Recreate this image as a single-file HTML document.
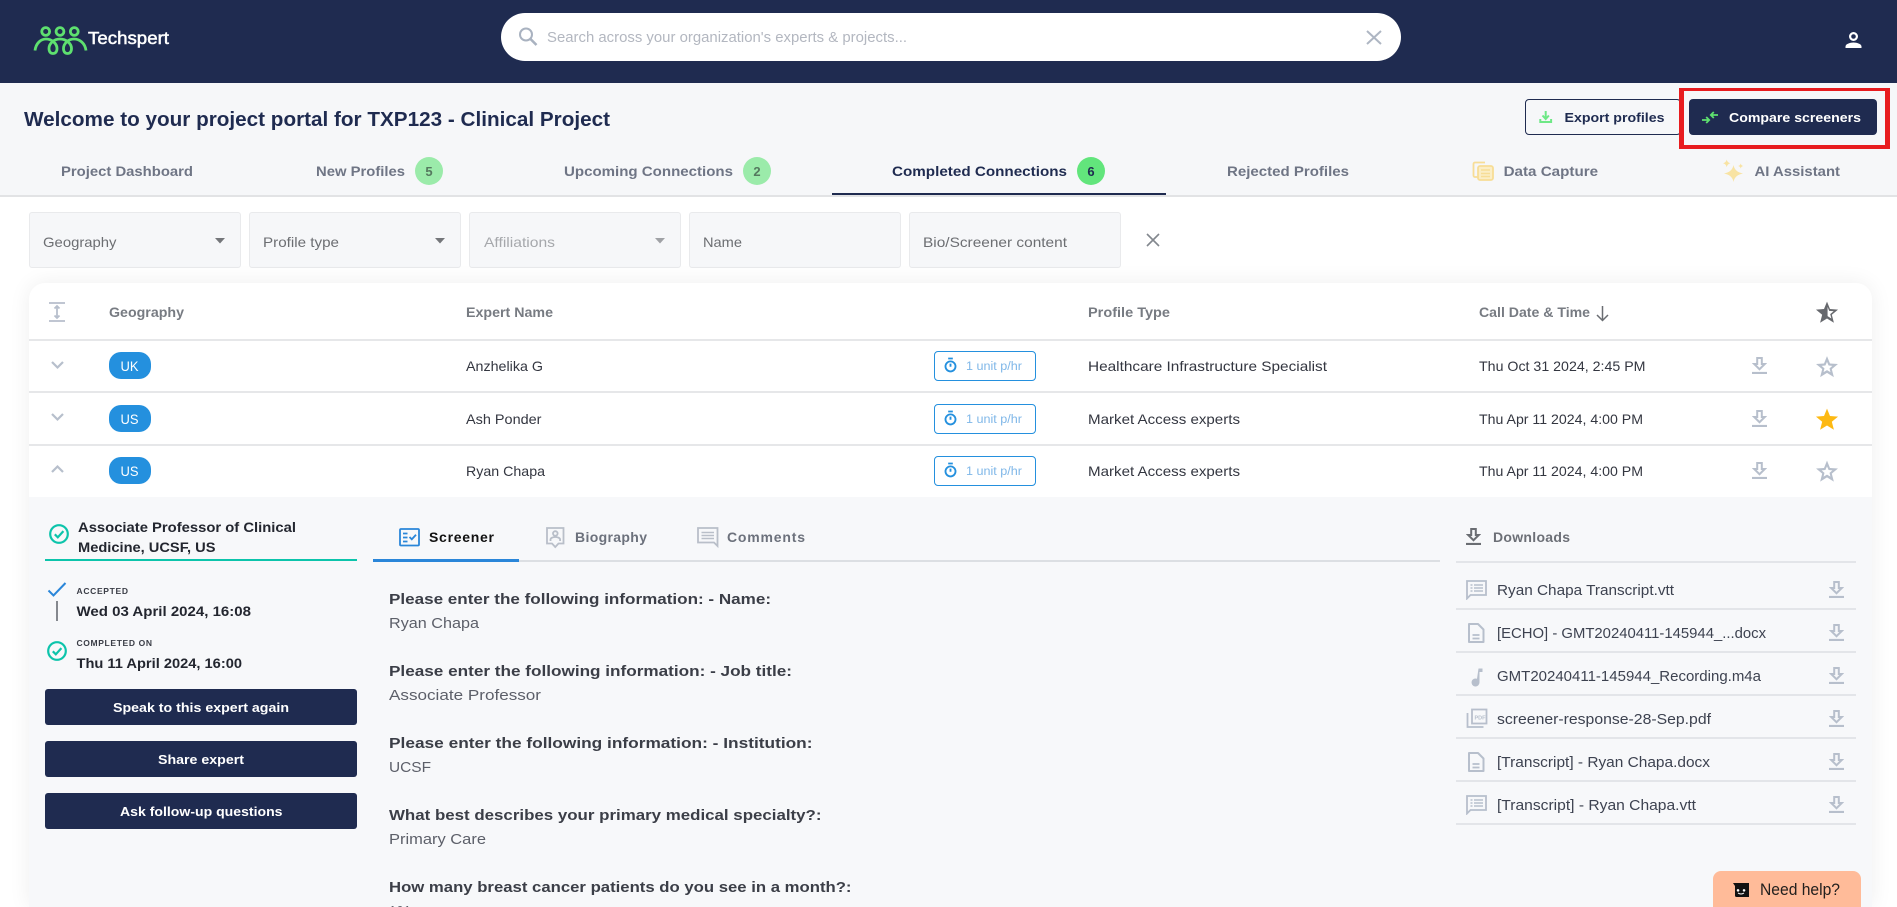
<!DOCTYPE html>
<html lang="en"><head><meta charset="utf-8"><title>Techspert project portal</title>
<style>
html,body{margin:0;padding:0;width:1897px;height:907px;overflow:hidden;background:#fff;font-family:"Liberation Sans",sans-serif}
#p{position:relative;width:1897px;height:907px;overflow:hidden}
.b{position:absolute;box-sizing:border-box}
svg.o{position:absolute;left:0;top:0;display:block}
text{font-family:"Liberation Sans",sans-serif}
.f{background:#f6f7f9;border:1px solid #e9eaec;border-radius:3px;top:212px;height:56px;width:212px}
.l{background:#e6e7e9;height:2px}
.btn{background:#1f2b50;border-radius:3px;left:45px;width:312px;height:36px}
.pill{left:934px;width:102px;height:30px;border:1px solid #2490de;border-radius:4px}
.geo{left:109px;width:42px;height:27px;border-radius:12px;background:#2490de}
.dl{left:1456px;width:400px;height:2px;background:#e3e5e9}
.q{font-size:15px;font-weight:700;fill:#3b3e47}
.a{font-size:15px;fill:#5c5f69}
.tb{font-size:14px;font-weight:700;fill:#6f7585}
.th{font-size:13.5px;font-weight:700;fill:#777b82}
.td{font-size:14px;fill:#333640}
.u{font-size:11.5px;fill:#7fb7e8}
.df{font-size:14.5px;fill:#3d4250}
.w{font-size:13px;font-weight:700;fill:#fff}
.fl{font-size:14px;fill:#6c6e72}
.bg{font-size:14px;fill:#fff}
.dt{font-size:14px;font-weight:700;fill:#23262f}
.sm{font-size:8.5px;font-weight:700;fill:#3a3d46}
</style></head><body><div id="p">
<div class="b" style="left:0;top:0;width:1897px;height:83px;background:#1f2b50"></div>
<div class="b" style="left:501px;top:13px;width:900px;height:48px;background:#fff;border-radius:24px"></div>
<div class="b" style="left:0;top:83px;width:1897px;height:112px;background:#f6f7f9"></div>
<div class="b" style="left:0;top:195px;width:1897px;height:2px;background:#e2e3e5"></div>
<div class="b" style="left:832px;top:193px;width:334px;height:2px;background:#1f2b50"></div>
<div class="b" style="left:415px;top:157px;width:28px;height:28px;border-radius:50%;background:#9bebaa"></div>
<div class="b" style="left:743px;top:157px;width:28px;height:28px;border-radius:50%;background:#9bebaa"></div>
<div class="b" style="left:1077px;top:157px;width:28px;height:28px;border-radius:50%;background:#62e57c"></div>
<div class="b" style="left:1525px;top:99px;width:156px;height:36px;border:1px solid #1f2b50;border-radius:4px;background:#f6f7f9"></div>
<div class="b" style="left:1689px;top:99px;width:188px;height:36px;background:#1f2b50;border-radius:4px"></div>
<div class="b" style="left:1679px;top:88px;width:211px;height:61px;border:solid #e81c1f;border-width:3px 5px 4px 5px"></div>
<div class="b f" style="left:29px"></div><div class="b f" style="left:249px"></div><div class="b f" style="left:469px"></div><div class="b f" style="left:689px"></div><div class="b f" style="left:909px"></div>
<div class="b" style="left:29px;top:283px;width:1843px;height:624px;background:#fff;border-radius:16px 16px 0 0;box-shadow:0 0 22px rgba(0,0,0,.07)"></div>
<div class="b l" style="left:29px;top:339px;width:1843px"></div>
<div class="b l" style="left:29px;top:391px;width:1843px"></div>
<div class="b l" style="left:29px;top:444px;width:1843px"></div>
<div class="b" style="left:29px;top:497px;width:1843px;height:410px;background:#f7f8fa"></div>
<div class="b geo" style="top:352px"></div><div class="b geo" style="top:405px"></div><div class="b geo" style="top:457px"></div>
<div class="b pill" style="top:351px"></div><div class="b pill" style="top:404px"></div><div class="b pill" style="top:456px"></div>
<div class="b" style="left:45px;top:559px;width:312px;height:2px;background:#0cc4ab"></div>
<div class="b" style="left:373px;top:560px;width:1067px;height:2px;background:#dcdfe3"></div>
<div class="b" style="left:373px;top:559px;width:146px;height:3px;background:#2a86d9"></div>
<div class="b btn" style="top:689px"></div><div class="b btn" style="top:741px"></div><div class="b btn" style="top:793px"></div>
<div class="b dl" style="top:561px"></div><div class="b dl" style="top:608px"></div><div class="b dl" style="top:651px"></div><div class="b dl" style="top:694px"></div><div class="b dl" style="top:737px"></div><div class="b dl" style="top:780px"></div><div class="b dl" style="top:823px"></div>
<div class="b" style="left:1713px;top:871px;width:148px;height:36px;background:#ffbb99;border-radius:8px 8px 0 0"></div>

<svg class="o" width="1897" height="907" viewBox="0 0 1897 907" xmlns="http://www.w3.org/2000/svg">
<defs>
<symbol id="dl" viewBox="0 0 15 17"><path d="M5.200 1h4.600v6h3L7.500 12.200 2.200 7h3z" fill="none" stroke="currentColor" stroke-width="2"/><path d="M0 16h15" stroke="currentColor" stroke-width="2.200"/></symbol>
<symbol id="st" viewBox="0 0 20 21"><path fill-rule="evenodd" fill="currentColor" d="M10 1L12.600 7.400 19.600 7.900 14.200 12.400 16 19.400 10 15.600 4 19.400 5.800 12.400 .4 7.900 7.400 7.400zM10 6L8.600 9.200 5.300 9.500 7.800 11.700 7 15 10 13.200 13 15 12.200 11.700 14.700 9.500 11.400 9.200z"/></symbol>
<symbol id="tm" viewBox="0 0 14 17"><circle cx="7" cy="10" r="5.400" fill="none" stroke="currentColor" stroke-width="2"/><path d="M4.500 1.500h5M7 7v3.400" stroke="currentColor" stroke-width="2"/></symbol>
<symbol id="cc" viewBox="0 0 20 20"><circle cx="10" cy="10" r="8.800" fill="none" stroke="#0cc4ab" stroke-width="2.200"/><path d="M5.800 10.300l3 3 5.600-6.200" fill="none" stroke="#0cc4ab" stroke-width="2.200"/></symbol>
<symbol id="cm" viewBox="0 0 21 20"><path d="M1 1h19v14H4.500L1 18.500z" fill="none" stroke="currentColor" stroke-width="1.800"/><path d="M4.500 5h2M8 5h9M4.500 8h2M8 8h9M4.500 11h2M8 11h9" stroke="currentColor" stroke-width="1.500"/></symbol>
<symbol id="dc" viewBox="0 0 18 20"><path d="M2 1h9l5.500 5.500V19H2z" fill="none" stroke="currentColor" stroke-width="2" stroke-linejoin="round"/><path d="M5.500 12h7M5.500 15.500h7" stroke="currentColor" stroke-width="1.700"/></symbol>
</defs>

<!-- logo -->
<g fill="none" stroke="#5ee06f" stroke-width="2.800">
<circle cx="45.700" cy="31.500" r="3.900"/><circle cx="60" cy="31.500" r="3.900"/><circle cx="74.300" cy="31.500" r="3.900"/>
<path d="M35 50.500C36 43 41 39 46 39C51.500 39 57 43.500 57 48.500C57 52 55.200 53.500 53 53.500C50.800 53.500 49 52 49 48.500C49 43.500 54 39 60 39C66 39 71.500 43.500 71.500 48.500C71.500 52 69.700 53.500 67.500 53.500C65.300 53.500 63.500 52 63.500 48.500C63.500 43.500 68.500 39 74 39C79.500 39 85 43 86 50.500"/>
</g>
<text x="88" y="44" font-size="17.500" fill="#fff" stroke="#fff" stroke-width=".5" textLength="81" lengthAdjust="spacingAndGlyphs">Techspert</text>

<!-- search -->
<g fill="none" stroke="#a9b2c0" stroke-width="2"><circle cx="526" cy="34.500" r="6"/><path d="M530.500 39l6 6" stroke-width="2.600"/></g>
<text x="547" y="42" font-size="14.500" fill="#b3b7c0" textLength="360" lengthAdjust="spacingAndGlyphs">Search across your organization's experts &amp; projects...</text>
<path d="M1367 31l14 13M1381 31l-14 13" stroke="#aeb6c3" stroke-width="2" fill="none"/>
<circle cx="1853.500" cy="36.500" r="3.400" fill="none" stroke="#fff" stroke-width="2.200"/><path d="M1845.500 48v-1.500c0-2.500 4.500-4 8-4s8 1.500 8 4V48z" fill="#fff"/>

<!-- title + actions -->
<text x="24" y="126" font-size="20" font-weight="700" fill="#1f2b50" textLength="586" lengthAdjust="spacingAndGlyphs">Welcome to your project portal for TXP123 - Clinical Project</text>
<g fill="none" stroke="#6ee886" stroke-width="2"><path d="M1545.700 111v8M1542.500 115.500l3.200 3.500 3.200-3.500"/><path d="M1540.300 119v3h10.800v-3"/></g>
<text x="1564.500" y="122" font-size="13" font-weight="700" fill="#1f2b50" textLength="100" lengthAdjust="spacingAndGlyphs">Export profiles</text>
<path d="M1718 115h-7M1713.800 112l-3 3 3 3M1702 120h7M1706.200 117l3 3-3 3" fill="none" stroke="#5ee06f" stroke-width="1.800"/>
<text x="1729" y="122" font-size="13" font-weight="700" fill="#fff" textLength="132" lengthAdjust="spacingAndGlyphs">Compare screeners</text>

<!-- tabs -->
<text class="tb" x="61" y="176" textLength="132" lengthAdjust="spacingAndGlyphs">Project Dashboard</text>
<text class="tb" x="316" y="176" textLength="89" lengthAdjust="spacingAndGlyphs">New Profiles</text>
<text x="429" y="176" font-size="13" font-weight="700" fill="#55795f" text-anchor="middle">5</text>
<text class="tb" x="564" y="176" textLength="169" lengthAdjust="spacingAndGlyphs">Upcoming Connections</text>
<text x="757" y="176" font-size="13" font-weight="700" fill="#55795f" text-anchor="middle">2</text>
<text class="tb" x="892" y="176" style="fill:#1f2b50" textLength="175" lengthAdjust="spacingAndGlyphs">Completed Connections</text>
<text x="1091" y="176" font-size="13" font-weight="700" fill="#1f2b50" text-anchor="middle">6</text>
<text class="tb" x="1227" y="176" textLength="122" lengthAdjust="spacingAndGlyphs">Rejected Profiles</text>
<g transform="translate(-1.500 0)"><g fill="none" stroke="#f7dd96" stroke-width="1.800"><path d="M1479 177h-2.500a1.500 1.500 0 0 1-1.500-1.500V164a1.500 1.500 0 0 1 1.500-1.500h10"/><rect x="1479.500" y="166" width="15" height="14" rx="2" fill="#fbeec6"/><path d="M1482.500 170h9M1482.500 173.500h9M1482.500 176.500h9" stroke-width="1.500"/></g></g>
<text class="tb" x="1503.600" y="176" textLength="94.500" lengthAdjust="spacingAndGlyphs">Data Capture</text>
<g fill="#f8e3a3"><path d="M1733.500 165q1.200 7 9.500 8.500q-8.300 1.500-9.500 8.500q-1.200-7-9.500-8.500q8.300-1.500 9.500-8.500z"/><path d="M1726.700 159.500q.6 3 3.700 3.800q-3.100.8-3.700 3.800q-.6-3-3.700-3.800q3.100-.8 3.700-3.800z"/><path d="M1740.700 163.500q.4 2 2.500 2.500q-2.100.5-2.500 2.500q-.4-2-2.500-2.500q2.100-.5 2.500-2.500z"/></g>
<text class="tb" x="1754.500" y="176" textLength="85.500" lengthAdjust="spacingAndGlyphs">AI Assistant</text>

<!-- filters -->
<text class="fl" x="43" y="247" textLength="73.500" lengthAdjust="spacingAndGlyphs">Geography</text>
<text class="fl" x="263" y="247" textLength="76" lengthAdjust="spacingAndGlyphs">Profile type</text>
<text class="fl" x="484" y="247" style="fill:#a6a8ac" textLength="71" lengthAdjust="spacingAndGlyphs">Affiliations</text>
<text class="fl" x="703" y="247" textLength="39" lengthAdjust="spacingAndGlyphs">Name</text>
<text class="fl" x="923" y="247" textLength="144" lengthAdjust="spacingAndGlyphs">Bio/Screener content</text>
<path d="M215 238h10l-5 5.500z" fill="#74767a"/><path d="M435 238h10l-5 5.500z" fill="#74767a"/><path d="M655 238h10l-5 5.500z" fill="#a0a2a6"/>
<path d="M1147 234l12 12M1159 234l-12 12" stroke="#83878e" stroke-width="1.600" fill="none"/>

<!-- table header -->
<g stroke="#b7bfcc" fill="none" stroke-width="1.800"><path d="M49 303h16M49 321h16M57 306v12" /><path d="M54.500 308.500l2.500-2.500 2.500 2.500M54.500 315.500l2.500 2.500 2.500-2.500"/></g>
<text class="th" x="109" y="317" textLength="75" lengthAdjust="spacingAndGlyphs">Geography</text>
<text class="th" x="466" y="317" textLength="87" lengthAdjust="spacingAndGlyphs">Expert Name</text>
<text class="th" x="1088" y="317" textLength="82" lengthAdjust="spacingAndGlyphs">Profile Type</text>
<text class="th" x="1479" y="317" textLength="111" lengthAdjust="spacingAndGlyphs">Call Date &amp; Time</text>
<path d="M1602.500 306v14M1597 315l5.500 5.500 5.500-5.500" fill="none" stroke="#6a6d72" stroke-width="1.500"/>
<g transform="translate(1815.500 300.500) scale(1.150)"><path fill="#66686d" d="M10 1L12.600 7.400 19.600 7.900 14.200 12.400 16 19.400 10 15.600 4 19.400 5.800 12.400 .4 7.900 7.400 7.400z"/><path fill="#fff" d="M10.500 5.500L11.900 9 15.800 9.300 12.800 11.800 13.800 15.600 10.500 13.600z"/></g>

<!-- rows -->
<g fill="none" stroke="#b7bfcc" stroke-width="2.200"><path d="M52 362l5.500 5.500 5.500-5.500M52 414l5.500 5.500 5.500-5.500M52 472l5.500-5.500 5.500 5.500"/></g>
<text class="bg" x="120.500" y="371" textLength="18" lengthAdjust="spacingAndGlyphs">UK</text>
<text class="bg" x="120.500" y="424" textLength="18" lengthAdjust="spacingAndGlyphs">US</text>
<text class="bg" x="120.500" y="476" textLength="18" lengthAdjust="spacingAndGlyphs">US</text>
<text class="td" x="466" y="371" textLength="77" lengthAdjust="spacingAndGlyphs">Anzhelika G</text>
<text class="td" x="466" y="424" textLength="75.500" lengthAdjust="spacingAndGlyphs">Ash Ponder</text>
<text class="td" x="466" y="476" textLength="79" lengthAdjust="spacingAndGlyphs">Ryan Chapa</text>
<use href="#tm" x="944" y="357" width="13" height="16" color="#2490de"/><use href="#tm" x="944" y="410" width="13" height="16" color="#2490de"/><use href="#tm" x="944" y="462" width="13" height="16" color="#2490de"/>
<text class="u" x="966" y="370" textLength="56" lengthAdjust="spacingAndGlyphs">1 unit p/hr</text>
<text class="u" x="966" y="423" textLength="56" lengthAdjust="spacingAndGlyphs">1 unit p/hr</text>
<text class="u" x="966" y="475" textLength="56" lengthAdjust="spacingAndGlyphs">1 unit p/hr</text>
<text class="td" x="1088" y="371" textLength="239" lengthAdjust="spacingAndGlyphs">Healthcare Infrastructure Specialist</text>
<text class="td" x="1088" y="424" textLength="152" lengthAdjust="spacingAndGlyphs">Market Access experts</text>
<text class="td" x="1088" y="476" textLength="152" lengthAdjust="spacingAndGlyphs">Market Access experts</text>
<text class="td" x="1479" y="371" textLength="166.500" lengthAdjust="spacingAndGlyphs">Thu Oct 31 2024, 2:45 PM</text>
<text class="td" x="1479" y="424" textLength="164" lengthAdjust="spacingAndGlyphs">Thu Apr 11 2024, 4:00 PM</text>
<text class="td" x="1479" y="476" textLength="164" lengthAdjust="spacingAndGlyphs">Thu Apr 11 2024, 4:00 PM</text>
<use href="#dl" x="1752" y="357" width="15" height="17" color="#b7bfcc"/><use href="#dl" x="1752" y="410" width="15" height="17" color="#b7bfcc"/><use href="#dl" x="1752" y="462" width="15" height="17" color="#b7bfcc"/>
<use href="#st" x="1815.500" y="355" width="23" height="24" color="#b7bfcc"/>
<g transform="translate(1815.500 407.500) scale(1.150)"><path fill="#fdb913" d="M10 1L12.600 7.400 19.600 7.900 14.200 12.400 16 19.400 10 15.600 4 19.400 5.800 12.400 .4 7.900 7.400 7.400z"/></g>
<use href="#st" x="1815.500" y="459.500" width="23" height="24" color="#b7bfcc"/>

<!-- left panel -->
<use href="#cc" x="49" y="524" width="20" height="20"/>
<text class="dt" x="78" y="532" textLength="218" lengthAdjust="spacingAndGlyphs">Associate Professor of Clinical</text>
<text class="dt" x="78" y="552" textLength="137.500" lengthAdjust="spacingAndGlyphs">Medicine, UCSF, US</text>
<path d="M48.500 590.500l5 5 12-12.500" fill="none" stroke="#2a86d9" stroke-width="2"/>
<path d="M57 601v20" stroke="#85888e" stroke-width="2"/>
<text class="sm" x="76.500" y="594" textLength="51.500" lengthAdjust="spacing">ACCEPTED</text>
<text class="dt" x="76.500" y="616" textLength="174.500" lengthAdjust="spacingAndGlyphs">Wed 03 April 2024, 16:08</text>
<use href="#cc" x="47" y="641" width="20" height="20"/>
<text class="sm" x="76.500" y="646" textLength="75.500" lengthAdjust="spacing">COMPLETED ON</text>
<text class="dt" x="76.500" y="668" textLength="165.500" lengthAdjust="spacingAndGlyphs">Thu 11 April 2024, 16:00</text>
<text class="w" x="113" y="712" textLength="176" lengthAdjust="spacingAndGlyphs">Speak to this expert again</text>
<text class="w" x="158" y="764" textLength="86" lengthAdjust="spacingAndGlyphs">Share expert</text>
<text class="w" x="120" y="816" textLength="162.500" lengthAdjust="spacingAndGlyphs">Ask follow-up questions</text>

<!-- inner tabs -->
<g fill="none" stroke="#2a86d9" stroke-width="1.800"><rect x="400" y="529" width="19" height="16.500" rx="1"/><path d="M403 533.500h4.500M403 537.500h4.500M403 541.500h4.500M409.500 537l2.300 2.300 4.200-4.500"/></g>
<text x="429" y="542" font-size="14" font-weight="700" fill="#111" textLength="65" lengthAdjust="spacing">Screener</text>
<g fill="none" stroke="#b9bfc9" stroke-width="1.800"><path d="M547 528h16.500v15.500h-5l-3.250 3.500-3.250-3.500h-5z"/><circle cx="555.300" cy="533.500" r="2.300"/><path d="M550.500 541v-1.500c0-1.500 2.500-2.500 4.800-2.500s4.800 1 4.800 2.500V541"/></g>
<text x="575" y="542" font-size="14" font-weight="700" fill="#6c717c" textLength="72" lengthAdjust="spacing">Biography</text>
<g fill="none" stroke="#b9bfc9" stroke-width="1.800"><path d="M698 528h19.500v18l-3.500-3.500h-16z"/><path d="M701.500 532.500h12.500M701.500 535.500h12.500M701.500 538.500h12.500" stroke-width="1.500"/></g>
<text x="727" y="542" font-size="14" font-weight="700" fill="#6c717c" textLength="78" lengthAdjust="spacing">Comments</text>

<!-- screener -->
<text class="q" x="389" y="604" textLength="382" lengthAdjust="spacingAndGlyphs">Please enter the following information: - Name:</text>
<text class="a" x="389" y="628" textLength="90" lengthAdjust="spacingAndGlyphs">Ryan Chapa</text>
<text class="q" x="389" y="676" textLength="403" lengthAdjust="spacingAndGlyphs">Please enter the following information: - Job title:</text>
<text class="a" x="389" y="700" textLength="152" lengthAdjust="spacingAndGlyphs">Associate Professor</text>
<text class="q" x="389" y="748" textLength="423.500" lengthAdjust="spacingAndGlyphs">Please enter the following information: - Institution:</text>
<text class="a" x="389" y="772" textLength="42" lengthAdjust="spacingAndGlyphs">UCSF</text>
<text class="q" x="389" y="820" textLength="432.500" lengthAdjust="spacingAndGlyphs">What best describes your primary medical specialty?:</text>
<text class="a" x="389" y="844" textLength="97" lengthAdjust="spacingAndGlyphs">Primary Care</text>
<text class="q" x="389" y="892" textLength="462.500" lengthAdjust="spacingAndGlyphs">How many breast cancer patients do you see in a month?:</text>
<text class="a" x="389" y="916" textLength="22" lengthAdjust="spacingAndGlyphs">101</text>

<!-- downloads -->
<use href="#dl" x="1466" y="528" width="15" height="17" color="#6a6d72"/>
<text x="1493" y="542" font-size="14" font-weight="700" fill="#6c6f76" textLength="77" lengthAdjust="spacing">Downloads</text>
<use href="#cm" x="1466" y="580" width="21" height="20" color="#b7bfcc"/>
<use href="#dc" x="1467" y="623" width="18" height="20" color="#b7bfcc"/>
<path d="M1479 669h4v3.500h-3V683a4 4 0 1 1-2.500-3.700z" fill="#b7bfcc" transform="translate(-.5 -.5)"/>
<g fill="none" stroke="#b7bfcc" stroke-width="1.800"><rect x="1472" y="709.500" width="14.500" height="14"/><path d="M1467.500 713v14h16"/></g>
<text x="1474.500" y="719.500" font-size="5.500" font-weight="700" fill="#b7bfcc">PDF</text>
<use href="#dc" x="1467" y="752" width="18" height="20" color="#b7bfcc"/>
<use href="#cm" x="1466" y="795" width="21" height="20" color="#b7bfcc"/>
<text class="df" x="1497" y="595" textLength="177" lengthAdjust="spacingAndGlyphs">Ryan Chapa Transcript.vtt</text>
<text class="df" x="1497" y="638" textLength="269" lengthAdjust="spacingAndGlyphs">[ECHO] - GMT20240411-145944_...docx</text>
<text class="df" x="1497" y="681" textLength="264" lengthAdjust="spacingAndGlyphs">GMT20240411-145944_Recording.m4a</text>
<text class="df" x="1497" y="724" textLength="214" lengthAdjust="spacingAndGlyphs">screener-response-28-Sep.pdf</text>
<text class="df" x="1497" y="767" textLength="213" lengthAdjust="spacingAndGlyphs">[Transcript] - Ryan Chapa.docx</text>
<text class="df" x="1497" y="810" textLength="199" lengthAdjust="spacingAndGlyphs">[Transcript] - Ryan Chapa.vtt</text>
<use href="#dl" x="1829" y="581" width="15" height="17" color="#b7bfcc"/><use href="#dl" x="1829" y="624" width="15" height="17" color="#b7bfcc"/><use href="#dl" x="1829" y="667" width="15" height="17" color="#b7bfcc"/><use href="#dl" x="1829" y="710" width="15" height="17" color="#b7bfcc"/><use href="#dl" x="1829" y="753" width="15" height="17" color="#b7bfcc"/><use href="#dl" x="1829" y="796" width="15" height="17" color="#b7bfcc"/>

<!-- help -->
<path d="M1733 883h16v14h-12.500a1.500 1.500 0 0 1-1.500-1.500v-9.500z" fill="#111"/><path d="M1738 889.500a.8.800 0 1 0 .1 0M1744 889.500a.8.800 0 1 0 .1 0" fill="#fff" stroke="#fff"/><path d="M1738 893q3 2 6 0" stroke="#fff" fill="none"/>
<text x="1760" y="895" font-size="16.500" fill="#23201e" textLength="80" lengthAdjust="spacingAndGlyphs">Need help?</text>
</svg>
</div></body></html>
